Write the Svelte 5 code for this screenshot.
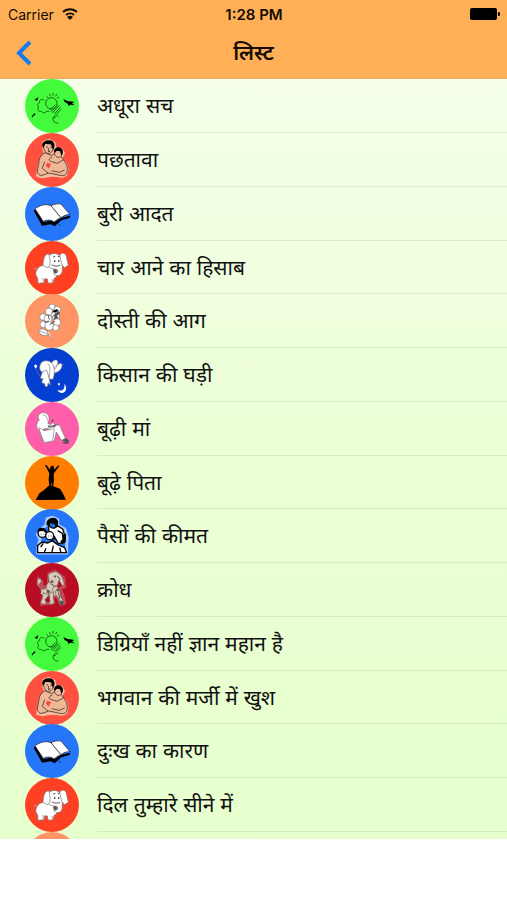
<script lang="ts">
  type Story = { title: string; icon: string; color: string };

  const stories: Story[] = [
    { title: 'अधूरा सच', icon: 'nature', color: '#43fb3c' },
    { title: 'पछतावा', icon: 'mother', color: '#ff5040' },
    { title: 'बुरी आदत', icon: 'book', color: '#2676fa' },
    { title: 'चार आने का हिसाब', icon: 'elephant', color: '#ff4023' },
    { title: 'दोस्ती की आग', icon: 'flowers', color: '#ff9564' },
    { title: 'किसान की घड़ी', icon: 'fairy', color: '#053fd2' },
    { title: 'बूढ़ी मां', icon: 'reader', color: '#ff5eab' },
    { title: 'बूढ़े पिता', icon: 'climber', color: '#ff7d00' },
    { title: 'पैसों की कीमत', icon: 'family', color: '#2676fa' },
    { title: 'क्रोध', icon: 'goat', color: '#b80d22' },
    { title: 'डिग्रियाँ नहीं ज्ञान महान है', icon: 'nature', color: '#43fb3c' },
    { title: 'भगवान की मर्जी में खुश', icon: 'mother', color: '#ff5040' },
    { title: 'दुःख का कारण', icon: 'book', color: '#2676fa' },
    { title: 'दिल तुम्हारे सीने में', icon: 'elephant', color: '#ff4023' },
    { title: '', icon: 'flowers', color: '#ff9564' }
  ];
</script>

{#snippet picture(name: string)}
  {#if name === 'nature'}
    <g class="line green">
      <circle cx="79" cy="73" r="17" />
      <path d="M64 51l5 5M74 45l2 7M84 42v8M95 45l-3 7M102 54l-6 4" />
      <path d="M58 64c-8-7-17 0-14 7-8 2-8 11-2 13-8 6-1 16 7 13 5 7 13 5 15 0h8" />
      <path d="M77 99l19-19M82 102l21-23M88 105l18-20M94 106l14-15M75 92l16-15" />
      <path d="M100 111c-9-4-17 2-16 10 1 8 8 12 16 11M84 117l8-2" />
    </g>
    <path d="M115 60l12 6 8 1 14 2-8 4 8 6-14-2-4 5-3-8-9-5zM28 63l12-9-3 11zM20 111l10-9 1 6-6 2-3 6z" />
  {:else if name === 'mother'}
    <path class="skin outline" d="M55 26l17-6 17 10 3 17 18 0 7 14-8 16 14 15 5 17-4 18-12 5-30-4-31 5-15-4 5-35 5-17 15-10-6-18z" />
    <g class="ink skin">
      <path d="M60 59c-10 6-17 14-18 26l-5 30c2 11 9 14 17 11l18-6 28 6c14 4 22 2 25-5 4-10 2-26-6-35l-10-16-18-10-11 8z" />
      <path d="M57 34c-3 9 0 20 8 26 8 5 17-3 20-12l-3-16-14-5z" />
      <path d="M88 59c0 9 8 16 15 14 7-2 12-12 7-19l-16-2z" />
      <path d="M82 72c-12 5-12 10-5 13l19 6 18-10M69 120l-17-14 7-20M80 113l23 5 16-7" />
    </g>
    <path d="M54 44c-7-14 6-24 19-22 16 1 20 17 11 29-3-5-3-12-7-17l-17-1c-1 5-3 8-6 11zM87 55c1-15 22-17 26-3 2 7-1 12-4 16l-4-14-10-1-5 7z" />
    <path class="thin" d="M64 43l5-2M75 42l6 1M71 45l-1 7 4 1M69 56l6-1" />
    <path class="accent" d="M67 89l11 4-6 14-10-9z" />
  {:else if name === 'book'}
    <path d="M26 71l5-4 24 38 23-4 10 5 21-14 27-6-2 7-25 7-20 18-12-6-26 4z" />
    <g class="ink white">
      <path d="M30 65c14-9 29-16 48-9l30 36c-8 3-15 7-21 13-8-8-21-7-32-2z" />
      <path d="M78 56c12-6 22-6 30-5l27 32c-9-1-19 3-27 9z" />
    </g>
    <path class="thin" d="M101 111l6 5" />
  {:else if name === 'elephant'}
    <g class="ink soft white">
      <path d="M37 84c8-11 20-13 34-9l28 18c-1 10-4 16-11 18l-4 14-14 2-3-13-8-1-2 12-18 2-1-16c-8-9-6-19-1-27z" />
      <path d="M66 53c7-20 34-21 42-3 5 12 3 24 4 38-1 13-9 18-19 15-7-2-10-9-6-12 5 4 11 5 12-1-1-5-6-6-12-6-16 0-23-14-21-31z" />
      <path d="M72 39c-14-2-17 17-18 34l12 7c8-1 10-11 9-22zM104 42c10-11 20-4 21 8l5 23-12 7-8-10z" />
      <path d="M37 85c-9 0-7-2-10-5M53 111l2 11M81 114l1 9" />
    </g>
    <path class="thin" d="M84 48l7-2M98 46l6 1M80 71c9 6 18 5 25 2" />
    <path class="faded" d="M87 57h4v6h-4zM99 57h4v6h-4zM84 87l8-2 5 10-8 3z" />
  {:else if name === 'flowers'}
    <g class="ink soft white">
      <circle cx="81" cy="39" r="9" />
      <circle cx="97" cy="47" r="10" />
      <circle cx="72" cy="53" r="11" />
      <circle cx="91" cy="66" r="13" />
      <circle cx="54" cy="69" r="10" />
      <circle cx="69" cy="75" r="12" />
      <circle cx="96" cy="85" r="11" />
      <circle cx="55" cy="91" r="10" />
      <circle cx="73" cy="96" r="13" />
      <circle cx="92" cy="101" r="9" />
      <path d="M39 108c15-8 30 1 32 14-13 7-26 2-32-14z" />
      <path d="M40 109l29 12M68 108c-2 10 7 19 15 30" />
    </g>
    <path class="thin" d="M80 55l14-8 7 3M81 72l12-15 8 4M73 77l-4-15M57 85l15-4M74 92l16-10" />
    <path class="faded" d="M86 64l15-13 4 6-9 9 5 5-17 7 5-9z" />
    <path d="M84 51l12-5 4 5-11 5z" />
  {:else if name === 'fairy'}
    <g class="ink soft white">
      <path d="M75 57c4-14 10-23 19-21 11 3 1 25-10 32zM85 62c10-13 20-18 26-15 2 16-9 25-26 29z" />
      <path d="M44 60c0-19 14-25 29-20 17 6 18 38 11 53-9 3-13-2-15-11l-7-11c-10 4-17 0-18-11z" />
      <path d="M57 68c-7 3-8 16-10 20-2 5 4 5 7 3l-4 13 9 3 2 9 7-1 1-10 7 6-3-18-7-25zM47 89L32 62M68 47c11 8 5 24 5 42" />
    </g>
    <path class="white" d="M27 54l5-5 5 6-5 7zM99 110c-1-6 4-7 6-2-1 5-3 5-6 2zM118 107c9 10 7 25-6 28-8 0-13-4-15-9 15 6 24-3 21-19z" />
  {:else if name === 'reader'}
    <g class="ink soft white">
      <path d="M45 35c12-9 31 2 27 20l-4 8 21 13-8 9-21-5-14 8c-14-7-14-25-3-34-5-6-5-13 2-19z" />
      <path d="M42 77l15 9 25-5 14-12c10-2 12 8 14 16l13 27-11 6-18-28-6 26-30 6-12-24z" />
      <path d="M55 82l27-7 17-11M46 89l8 28M88 80l-5 36M70 72l14-10 7 5-18 11zM53 39c11 0 14 7 14 17" />
    </g>
    <path class="faded" d="M109 115l13-7 10 7-2 10c-8 1-17 0-20-3l13-2z" />
    <path class="thin" d="M69 72l14 1 9-5M78 58l8-3" />
  {:else if name === 'climber'}
    <path d="M60 28l4-1 12 15c-2-9 2-13 6-13s7 4 5 13l13-14 3 2-14 19-3 6 1 17-3 20h-4l-1-18-2 18h-4l-2-22 2-18z" />
    <path d="M32 132l11-20 14-10 14-13 14 2 20 7 8 13 10 20z" />
  {:else if name === 'family'}
    <g class="halo">
      <path d="M63 49l3-20 17-4 15 7v17l21 11 8 26-2 20 0 26H38l3-28 4-13-8-15 9-14z" />
    </g>
    <g class="ink white strong">
      <path d="M72 39c-2 14 9 20 17 18l8-7 16 10 8 25-3 16-18 3-11-20-18-19z" />
      <circle cx="52" cy="72" r="13" />
      <circle cx="74" cy="80" r="12" />
      <path d="M38 131v-22l14-10 17 3 12-7 17 12 21 9 6 15z" />
      <path d="M98 65l14 8 2 17M63 118l-5 12M85 110l-4 19M55 103l-8 11M104 116l4 15M78 98l12-10" />
    </g>
    <path d="M65 48c-3-12 7-21 18-22 13 0 20 10 15 22l-5 9-5-12-11-2-6 7zM39 70c-4-12 8-17 19-11l8 8-2 7-9-8-11 1zM113 77l10-3-1 25-12 6-4-8 8-8z" />
    <path class="thin" d="M80 49h4M47 76h3M56 76h3M69 81h3M77 81h3" />
  {:else if name === 'goat'}
    <g class="halo faint">
      <path d="M40 46l10 9 0 18 20-3 2-38 19-7 25 20 3 27-14 4 8 20 6 24-10 4-14-26-12 2 2 20-36 4 8-24-8-25-10-12z" />
    </g>
    <g class="ink cream">
      <path d="M37 55c-2-9 10-11 12-2 0 8-10 7-6 17l12 9 9-5c0-12 6-18 14-18l12 3 11 20 4 13-13 7-20-2-14 5-11-9 2-16-10-8z" />
      <path d="M72 53l-3-16 8-8 14-3c13 3 24 15 27 39l-6 4-10-18-5 17-12 1-11-9z" />
      <path d="M55 89l17 7-12 14 6 12-16 2-3-7 4-8zM72 92l14-6-1 19 3 16-16 4 3-10zM92 83l10-5 7 26 7 10-4 11-9-1-1-17-10-12z" />
      <path d="M62 76l12 11M88 69l-8 17M79 62l13 10" />
    </g>
    <path class="faded" d="M76 55l7-4 3 7-7 3zM66 79l9 4-4 10-6-5zM93 78l10 1-4 9zM104 113l11 0 0 12-10 1zM85 39l9-2-2 7zM59 111l5-1v8z" />
    <path class="thin" d="M97 39l9 12M100 89l5 17" />
  {/if}
{/snippet}

<div class="screen">
  <header>
    <div class="status">
      <div class="carrier">
        <span>Carrier</span>
        <svg class="wifi" viewBox="0 0 16 12" aria-hidden="true">
          <path d="M1 4a10 10 0 0 1 14 0M4 7a6 6 0 0 1 8 0" />
          <path class="dot" d="M5 9a4 4 0 0 1 6 0L8 12z" />
        </svg>
      </div>
      <span class="time">1:28 PM</span>
      <svg class="battery" viewBox="0 0 30 12" aria-hidden="true">
        <rect width="27" height="12" rx="2" />
        <path d="M28 4c3 0 3 4 0 4z" />
      </svg>
    </div>
    <nav>
      <button aria-label="Back">
        <svg viewBox="0 0 16 26" aria-hidden="true">
          <path d="M14 2L3 13l11 11" />
        </svg>
      </button>
      <h1>लिस्ट</h1>
    </nav>
  </header>

  <ul>
    {#each stories as story}
      <li>
        <svg class="avatar" viewBox="0 0 162 162" aria-hidden="true">
          <circle cx="81" cy="81" r="81" fill={story.color} />
          {@render picture(story.icon)}
        </svg>
        <span class="title">{story.title}</span>
      </li>
    {/each}
  </ul>

  <footer></footer>
</div>

<style>
  :global(body) {
    margin: 0;
    background: #fff;
  }

  .screen {
    display: flex;
    flex-direction: column;
    height: 100vh;
    font-family: Inter, 'Noto Sans Devanagari', 'Noto Sans', sans-serif;
    color: #111;
  }

  header {
    background: #ffb056;
    border-bottom: 1px solid #e5ac68;
    color: #120c04;
  }

  .status {
    display: grid;
    grid-template-columns: 1fr auto 1fr;
    align-items: center;
    height: 28px;
    padding: 0 7px 0 8px;
    font-size: 14px;
  }

  .carrier {
    display: flex;
    align-items: center;
    gap: 8px;
  }

  .wifi {
    width: 16px;
    height: 12px;
    fill: none;
    stroke: #120c04;
    stroke-width: 2;
  }

  .wifi .dot {
    fill: #120c04;
    stroke: none;
  }

  .time {
    font-size: 15px;
    font-weight: 600;
  }

  .battery {
    justify-self: end;
    width: 30px;
    height: 12px;
    fill: #000;
  }

  nav {
    display: grid;
    grid-template-columns: 48px 1fr 48px;
    align-items: center;
    height: 50px;
  }

  button {
    display: flex;
    align-items: center;
    height: 48px;
    padding: 0 0 0 16px;
    border: 0;
    background: none;
    cursor: pointer;
  }

  button svg {
    width: 16px;
    height: 26px;
    fill: none;
    stroke: #147bf0;
    stroke-width: 4;
  }

  h1 {
    margin: 0;
    font-size: 21px;
    font-weight: 600;
    line-height: 32px;
    text-align: center;
  }

  ul {
    flex: 1;
    min-height: 0;
    margin: 0;
    padding: 0;
    list-style: none;
    overflow-y: auto;
    scrollbar-width: none;
    background: linear-gradient(#f5ffe9, #ebffd5 50%, #e7ffcd);
  }

  li {
    display: flex;
    gap: 18px;
    height: 54px;
    padding-left: 25px;
  }

  li:nth-child(4n) {
    height: 53px;
  }

  .avatar {
    flex: none;
    width: 54px;
    height: 54px;
  }

  .title {
    flex: 1;
    box-sizing: border-box;
    height: 100%;
    border-bottom: 1px solid rgba(80, 110, 70, 0.13);
    font-size: 21px;
    line-height: 54px;
    white-space: nowrap;
  }

  footer {
    flex: none;
    height: 61px;
    background: #fff;
  }

  .line,
  .thin {
    fill: none;
    stroke: #111;
    stroke-width: 2;
  }

  .line.green {
    stroke: #126b13;
    stroke-width: 3;
  }

  .ink {
    stroke: #211b18;
    stroke-width: 2;
    stroke-linejoin: round;
  }

  .ink.soft {
    stroke: #777;
  }

  .ink.strong {
    stroke: #090909;
    stroke-width: 4;
  }

  .white {
    fill: #fff;
  }

  .skin {
    fill: #efb795;
  }

  .outline {
    stroke: #f2c4a6;
    stroke-width: 5;
    stroke-linejoin: round;
  }

  .cream {
    fill: #d9c9bb;
    stroke: #695450;
  }

  .accent {
    fill: #ff4938;
  }

  .faded {
    fill: #555;
  }

  .halo {
    fill: none;
    stroke: #fff;
    stroke-width: 9;
    stroke-linejoin: round;
    opacity: 0.6;
  }

  .halo.faint {
    opacity: 0.25;
  }
</style>
